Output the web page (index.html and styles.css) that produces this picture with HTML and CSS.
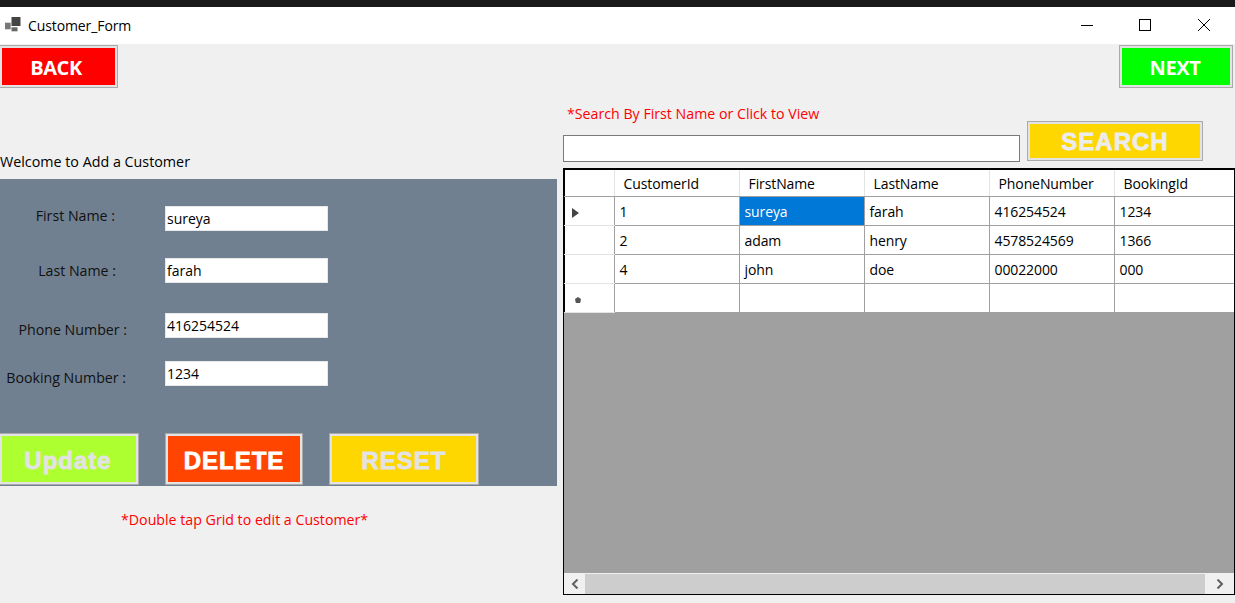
FILE: index.html
```html
<!DOCTYPE html>
<html>
<head>
    <title>Customer_Form</title>
    <link rel="stylesheet" href="styles.css">
</head>
<body>
    <div class="topstrip"></div>
    <div class="titlebar">
        <svg class="appicon" width="16" height="16" viewBox="0 0 16 16">
            <rect x="6.5" y="1" width="9" height="9" fill="#444"/>
            <rect x="0" y="6.7" width="5.7" height="6.6" fill="#777"/>
            <rect x="6.5" y="11.3" width="6" height="4" fill="#666"/>
        </svg>
        <span class="title">Customer_Form</span>
        <div class="winbtns">
            <svg class="winbtn" width="14" height="14" viewBox="0 0 14 14"><path d="M1 7.5H13" stroke="#000" fill="none"/></svg>
            <svg class="winbtn" width="14" height="14" viewBox="0 0 14 14"><rect x="1.5" y="1.5" width="11" height="11" stroke="#000" fill="none"/></svg>
            <svg class="winbtn" width="14" height="14" viewBox="0 0 14 14"><path d="M1 1L13 13M13 1L1 13" stroke="#000" fill="none"/></svg>
        </div>
    </div>

    <div class="form">
        <div class="leftside">
            <button class="btn nav back">BACK</button>
            <p class="welcome">Welcome to Add a Customer</p>
            <div class="panel">
                <div class="row first">
                    <label class="lbl l1">First Name :</label>
                    <input class="txt" type="text" value="sureya">
                </div>
                <div class="row second">
                    <label class="lbl l2">Last Name :</label>
                    <input class="txt" type="text" value="farah">
                </div>
                <div class="row third">
                    <label class="lbl l3">Phone Number :</label>
                    <input class="txt" type="text" value="416254524">
                </div>
                <div class="row fourth">
                    <label class="lbl l4">Booking Number :</label>
                    <input class="txt" type="text" value="1234">
                </div>
                <div class="actions">
                    <button class="btn big update">Update</button>
                    <button class="btn big delete">DELETE</button>
                    <button class="btn big reset">RESET</button>
                </div>
            </div>
            <p class="note">*Double tap Grid to edit a Customer*</p>
        </div>

        <div class="rightside">
            <div class="navrow">
                <button class="btn nav next">NEXT</button>
            </div>
            <div class="searchrow">
                <div class="searchleft">
                    <p class="hint">*Search By First Name or Click to View</p>
                    <input class="searchbox" type="text">
                </div>
                <button class="btn big search">SEARCH</button>
            </div>
            <div class="grid">
                <table class="data">
                    <tr>
                        <th class="rowhead"></th>
                        <th>CustomerId</th>
                        <th>FirstName</th>
                        <th>LastName</th>
                        <th>PhoneNumber</th>
                        <th>BookingId</th>
                    </tr>
                    <tr>
                        <td class="rowhead"><svg width="7" height="10" viewBox="0 0 7 10"><path d="M0 0L7 5L0 10Z" fill="#444"/></svg></td>
                        <td>1</td>
                        <td class="selected">sureya</td>
                        <td>farah</td>
                        <td>416254524</td>
                        <td>1234</td>
                    </tr>
                    <tr>
                        <td class="rowhead"></td>
                        <td>2</td>
                        <td>adam</td>
                        <td>henry</td>
                        <td>4578524569</td>
                        <td>1366</td>
                    </tr>
                    <tr>
                        <td class="rowhead"></td>
                        <td>4</td>
                        <td>john</td>
                        <td>doe</td>
                        <td>00022000</td>
                        <td>000</td>
                    </tr>
                    <tr>
                        <td class="rowhead"><svg class="newrow" width="6" height="6" viewBox="0 0 6 6"><path d="M3 0L6 2L5.2 6H0.8L0 2Z" fill="#555"/></svg></td>
                        <td></td>
                        <td></td>
                        <td></td>
                        <td></td>
                        <td></td>
                    </tr>
                </table>
                <div class="empty"></div>
                <div class="hscroll">
                    <div class="arrow">
                        <svg width="8" height="10" viewBox="0 0 8 10"><path d="M6.5 0.5L2 5L6.5 9.5" stroke="#606060" stroke-width="2" fill="none"/></svg>
                    </div>
                    <div class="thumb"></div>
                    <div class="arrow">
                        <svg width="8" height="10" viewBox="0 0 8 10"><path d="M1.5 0.5L6 5L1.5 9.5" stroke="#606060" stroke-width="2" fill="none"/></svg>
                    </div>
                </div>
            </div>
        </div>
    </div>
</body>
</html>
```

FILE: styles.css
```css
html, body { margin: 0; padding: 0; height: 100%; overflow: hidden; }
body { background-color: #f0f0f0; font-family: "Open Sans", "Noto Sans", sans-serif; font-size: 14.2px; color: #000; }
p { margin: 0; }

.topstrip { height: 7px; background-color: #1a1a1a; }
.titlebar { height: 37px; background-color: #fff; display: flex; align-items: center; }
.appicon { margin-left: 5px; margin-top: -3px; }
.title { margin-left: 7px; font-size: 14px; letter-spacing: -0.1px; margin-top: -1px; }
.winbtns { margin-left: auto; display: flex; gap: 44px; padding-right: 24px; margin-top: -2px; }
.winbtn:last-child { margin-left: 1px; }

.form { display: flex; }
.leftside { width: 557px; }
.rightside { margin-left: 6px; width: 672px; }

.btn { display: block; padding: 0; border: 1px solid #aaa; box-shadow: inset 0 0 0 2px #e3e3e3; }
.nav { width: 119px; height: 43px; font-family: "Open Sans", sans-serif; font-size: 20px; font-weight: 700; color: #fff; letter-spacing: -0.4px; padding-top: 2px; }
.back { margin-top: 1px; margin-left: -1px; background-color: #f00; padding-right: 5px; }
.next { width: 114px; background-color: #0f0; padding-right: 2px; }
.navrow { display: flex; justify-content: flex-end; margin-top: 1px; padding-right: 2px; }

.welcome { margin-top: 63px; height: 28px; line-height: 21px; font-size: 14.3px; }
.panel { height: 307px; background-color: #708090; padding-top: 27px; box-sizing: border-box; }
.row { display: flex; height: 25px; }
.second { margin-top: 27px; }
.third { margin-top: 30px; }
.fourth { margin-top: 23px; }
.lbl { width: 165px; box-sizing: border-box; line-height: 20px; white-space: nowrap; color: #111; text-align: right; }
.l1 { padding-right: 50px; }
.l2 { padding-right: 49px; margin-top: 3px; }
.l3 { padding-right: 38px; margin-top: 7px; }
.l4 { padding-right: 39px; margin-top: 7px; }
.txt { width: 163px; height: 25px; box-sizing: border-box; border: 1px solid #e8e8e8; padding: 0 1px; font-family: "Open Sans", sans-serif; font-size: 14px; }

.actions { display: flex; margin-top: 47px; margin-left: -1px; }
.big { height: 52px; padding-top: 3px; font-family: "Liberation Sans", sans-serif; font-weight: 700; font-size: 24px; letter-spacing: 1px; -webkit-text-stroke: 0.8px currentColor; }
.update { width: 140px; padding-right: 2px; background-color: #adff2f; color: #e3e3e3; }
.delete { width: 138px; margin-left: 26px; background-color: #ff4500; color: #fff; }
.reset { width: 150px; margin-left: 26px; background-color: #ffd700; color: #e3e3e3; }

.note { margin-top: 23px; margin-left: 121px; line-height: 22px; color: #f00; }

.searchrow { display: flex; height: 80px; }
.searchleft { width: 457px; }
.hint { margin-top: 16px; margin-left: 4px; line-height: 20px; color: #f00; }
.searchbox { display: block; margin-top: 11px; width: 457px; height: 27px; box-sizing: border-box; border: 1px solid #7a7a7a; background-color: #fff; }
.search { width: 176px; height: 40px; padding-top: 2px; margin-left: 7px; margin-top: 33px; background-color: #ffd700; color: #ececec; }

.grid { display: flex; flex-direction: column; height: 427px; width: 672px; box-sizing: border-box; border: 1px solid #000; border-top-width: 2px; overflow: hidden; background-color: #a0a0a0; }
.data { border-collapse: collapse; table-layout: fixed; width: 670px; background-color: #fff; flex: none; font-size: 14px; }
.data th, .data td { width: 125px; border: 1px solid #a0a0a0; padding: 2px 5px 0; text-align: left; font-weight: 400; letter-spacing: -0.1px; overflow: hidden; white-space: nowrap; height: 29px; box-sizing: border-box; }
.data tr:first-child th { border-color: #e3e3e3; border-top: none; border-bottom-color: #a0a0a0; height: 26px; padding-left: 9px; }
.data th:first-child, .data td:first-child { border-left: none; width: 50px; }
.data th:last-child, .data td:last-child { border-right: none; width: 120px; }
.data .rowhead { border-top-color: #e3e3e3; border-bottom-color: #e3e3e3; border-right-color: #a0a0a0; padding: 5px 0 0 8px; line-height: 0; box-shadow: inset 1px 0 #000; }
.newrow { margin-left: 3px; }
.selected { background-color: #0078d7; color: #fff; }

.empty { flex: 1; }
.hscroll { flex: none; display: flex; height: 21px; background-color: #f0f0f0; border-top: 1px solid #f0f0f0; box-sizing: border-box; }
.arrow { width: 21px; display: flex; align-items: center; justify-content: center; }
.thumb { flex: 1; background-color: #cdcdcd; }
.hscroll .arrow:last-child { width: 29px; }
```
